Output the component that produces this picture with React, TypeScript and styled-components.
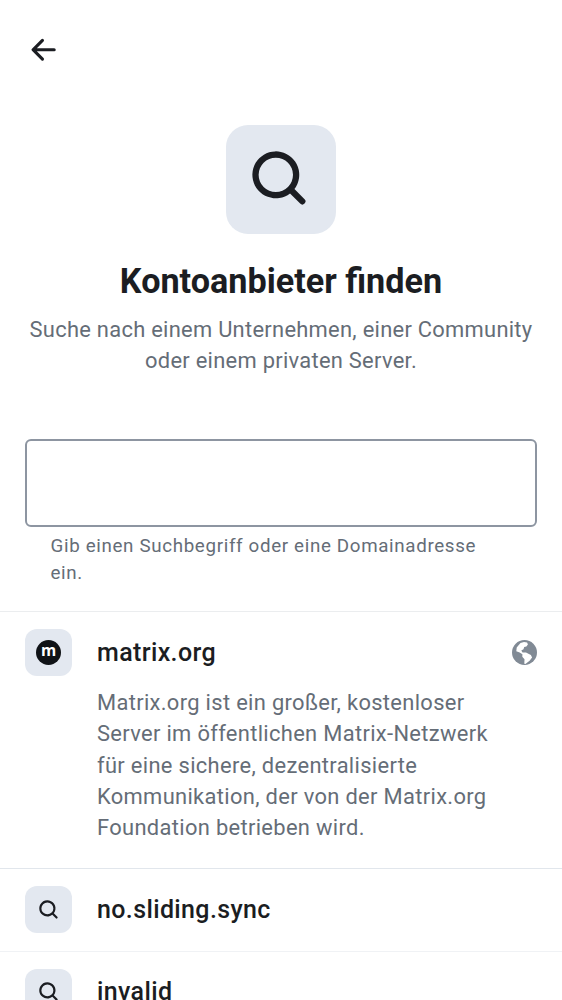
import React from "react";
import styled, { createGlobalStyle } from "styled-components";

const Global = createGlobalStyle`
  * { box-sizing: border-box; }
  html, body { margin: 0; height: 1000px; overflow: hidden; background: #fff; }
  body { font-family: Roboto, sans-serif; color: #1b1d22; }
  h1, h2, p { margin: 0; }
`;

const Screen = styled.main`
  width: 562px;
  height: 1000px;
  overflow: hidden;
  display: flex;
  flex-direction: column;
`;
const TopBar = styled.header`
  height: 100px;
  flex: none;
  display: flex;
  align-items: center;
  padding-left: 24px;
`;
const BackButton = styled.button`
  border: 0;
  padding: 0;
  background: none;
  display: flex;
  color: #1b1d22;
`;
const Hero = styled.section`
  flex: none;
  height: 339px;
  padding-top: 25px;
  display: flex;
  flex-direction: column;
  align-items: center;
  text-align: center;
`;
const Tile = styled.div<{ $size: number; $radius: number }>`
  width: ${(p) => p.$size}px;
  height: ${(p) => p.$size}px;
  border-radius: ${(p) => p.$radius}px;
  flex: none;
  background: #e3e8f0;
  display: flex;
  align-items: center;
  justify-content: center;
`;
const Title = styled.h1`
  margin-top: 26.5px;
  font-size: 34.2px;
  line-height: 41px;
  font-weight: 700;
  white-space: nowrap;
`;
const Subtitle = styled.p`
  margin-top: 12px;
  font-size: 21.9px;
  line-height: 31.25px;
  letter-spacing: 0.28px;
  color: #656d77;
  white-space: nowrap;
`;
const SearchField = styled.input`
  flex: none;
  height: 88px;
  margin: 0 25px;
  border: 2px solid #8d95a1;
  border-radius: 6px;
  background: #fff;
`;
const Hint = styled.p`
  flex: none;
  height: 84px;
  padding: 6px 0 0 50.5px;
  font-size: 18.75px;
  line-height: 26.5px;
  letter-spacing: 0.66px;
  color: #656d77;
`;
const Provider = styled.article<{ $height: number; $line: string }>`
  flex: none;
  height: ${(p) => p.$height}px;
  border-top: 1px solid ${(p) => p.$line};
  padding: 17px 25px 0;
`;
const ProviderHead = styled.div`
  display: flex;
  align-items: center;
  height: 47px;
`;
const Name = styled.h2`
  flex: 1;
  margin-left: 25px;
  font-size: 25px;
  line-height: 36px;
  font-weight: 500;
  letter-spacing: 0.37px;
`;
const Description = styled.p`
  margin: 11px 0 0 72px;
  font-size: 21.9px;
  line-height: 31.25px;
  letter-spacing: 0.33px;
  color: #656d77;
  white-space: nowrap;
`;

const SearchIcon = ({ size }: { size: number }) => (
  <svg width={size} height={size} viewBox="0 0 24 24" fill="currentColor">
    <path d="M15.05 16.463a7.5 7.5 0 1 1 1.414-1.414l3.243 3.244a1 1 0 0 1-1.414 1.414zM16 10.5a5.5 5.5 0 1 0-11 0 5.5 5.5 0 0 0 11 0" />
  </svg>
);
const BackIcon = () => (
  <svg width="38" height="38" viewBox="-0.3 0 24.3 24.3" fill="currentColor">
    <path d="m12.207 5.293.083.094a1 1 0 0 1-.083 1.32L7.914 11H19a1 1 0 1 1 0 2H7.914l4.293 4.293a1 1 0 1 1-1.414 1.414l-6-6a1 1 0 0 1 0-1.414l6-6a1 1 0 0 1 1.414 0" />
  </svg>
);
const GlobeIcon = () => (
  <svg width="25" height="25" viewBox="0 0 25 25">
    <circle cx="12.5" cy="12.5" r="12.5" fill="#818a95" />
    <path d="M8.5 3.1 12 2l3.1.4.8 2-1.5 2.2-2.2.5-.7 2.2-2.2 1.2 1.2 2.1H14l4.9 2.4 1.2 2.4-2.5 3.4-4.2 3.3-1.1-.4.2-4.4-2.2-2.5.1-2.5-2.7-1.9-3.4-1.2.4-3.6z" fill="#fff" />
  </svg>
);
const MatrixLogo = () => (
  <svg width="25" height="25" viewBox="0 0 25 25">
    <circle cx="12.5" cy="12.5" r="12.5" fill="#101317" />
    <text x="12.5" y="16.4" textAnchor="middle" fontFamily="Open Sans, sans-serif" fontSize="15.5" fontWeight="700" fill="#fff">m</text>
  </svg>
);

export default function App() {
  return (
    <Screen>
      <Global />
      <TopBar>
        <BackButton aria-label="Zurück"><BackIcon /></BackButton>
      </TopBar>
      <Hero>
        <Tile $size={109.4} $radius={22}><SearchIcon size={75} /></Tile>
        <Title>Kontoanbieter finden</Title>
        <Subtitle>Suche nach einem Unternehmen, einer Community<br />oder einem privaten Server.</Subtitle>
      </Hero>
      <SearchField aria-label="Kontoanbieter" />
      <Hint>Gib einen Suchbegriff oder eine Domainadresse<br />ein.</Hint>
      <Provider $height={257.3} $line="#ebedef">
        <ProviderHead>
          <Tile $size={47} $radius={12}><MatrixLogo /></Tile>
          <Name>matrix.org</Name>
          <GlobeIcon />
        </ProviderHead>
        <Description>
          Matrix.org ist ein großer, kostenloser<br />
          Server im öffentlichen Matrix-Netzwerk<br />
          für eine sichere, dezentralisierte<br />
          Kommunikation, der von der Matrix.org<br />
          Foundation betrieben wird.
        </Description>
      </Provider>
      <Provider $height={82.3} $line="#e1e6ec">
        <ProviderHead>
          <Tile $size={47} $radius={12}><SearchIcon size={26} /></Tile>
          <Name>no.sliding.sync</Name>
        </ProviderHead>
      </Provider>
      <Provider $height={82} $line="#f0f2f5">
        <ProviderHead>
          <Tile $size={47} $radius={12}><SearchIcon size={26} /></Tile>
          <Name>invalid</Name>
        </ProviderHead>
      </Provider>
    </Screen>
  );
}
